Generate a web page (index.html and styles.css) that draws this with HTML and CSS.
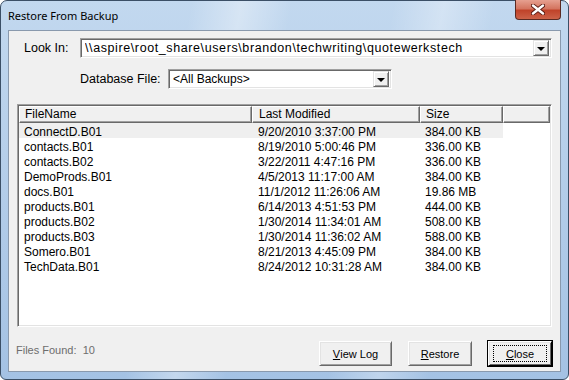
FILE: index.html
```html
<!DOCTYPE html>
<html lang="en">
<head>
  <meta charset="UTF-8" />
  <title>Restore From Backup</title>
  <link rel="stylesheet" href="styles.css">
</head>
<body>
  <div class="window">
    <div class="titlebar">
      <span class="title">Restore From Backup</span>
      <button class="close-x" aria-label="Close">
        <svg width="14" height="11" viewBox="0 0 14 11">
          <path d="M2 1.5 L12 9.5 M12 1.5 L2 9.5" stroke="#5a1a12" stroke-width="4.2" stroke-linecap="round"/>
          <path d="M2 1.5 L12 9.5 M12 1.5 L2 9.5" stroke="#ffffff" stroke-width="2.4" stroke-linecap="round"/>
        </svg>
      </button>
    </div>

    <div class="client">
      <div class="row look-in">
        <label class="lbl">Look In:</label>
        <div class="combo wide">
          <span class="combo-text path">\\aspire\root_share\users\brandon\techwriting\quotewerkstech</span>
          <span class="drop"><i></i></span>
        </div>
      </div>

      <div class="row db-file">
        <label class="lbl">Database File:</label>
        <div class="combo narrow">
          <span class="combo-text">&lt;All Backups&gt;</span>
          <span class="drop"><i></i></span>
        </div>
      </div>

      <div class="listview">
        <div class="lv-head">
          <span class="col c1">FileName</span>
          <span class="col c2">Last Modified</span>
          <span class="col c3">Size</span>
          <span class="col c4"></span>
        </div>
        <div class="lv-body" id="rows"></div>
      </div>

      <div class="bottom">
        <span class="found">Files Found:&nbsp; 10</span>
        <div class="buttons">
          <button class="btn viewlog"><u>V</u>iew Log</button>
          <button class="btn"><u>R</u>estore</button>
          <button class="btn default"><span class="focus"><u>C</u>lose</span></button>
        </div>
      </div>
    </div>
  </div>

  <script>
    // backup files found in the folder
    const files = [
      ['ConnectD.B01', '9/20/2010 3:37:00 PM', '384.00 KB'],
      ['contacts.B01', '8/19/2010 5:00:46 PM', '336.00 KB'],
      ['contacts.B02', '3/22/2011 4:47:16 PM', '336.00 KB'],
      ['DemoProds.B01', '4/5/2013 11:17:00 AM', '384.00 KB'],
      ['docs.B01', '11/1/2012 11:26:06 AM', '19.86 MB'],
      ['products.B01', '6/14/2013 4:51:53 PM', '444.00 KB'],
      ['products.B02', '1/30/2014 11:34:01 AM', '508.00 KB'],
      ['products.B03', '1/30/2014 11:36:02 AM', '588.00 KB'],
      ['Somero.B01', '8/21/2013 4:45:09 PM', '384.00 KB'],
      ['TechData.B01', '8/24/2012 10:31:28 AM', '384.00 KB']
    ];

    const rows = document.getElementById('rows');
    files.forEach((f, i) => {
      const row = document.createElement('div');
      row.className = 'lv-row' + (i === 0 ? ' selected' : '');
      f.forEach((text, c) => {
        const cell = document.createElement('span');
        cell.className = 'cell c' + (c + 1);
        cell.textContent = text;
        row.appendChild(cell);
      });
      rows.appendChild(row);
    });
  </script>
</body>
</html>
```

FILE: styles.css
```css
* {
  margin: 0;
  padding: 0;
  box-sizing: border-box;
}

body {
  width: 569px;
  height: 380px;
  background: #ffffff;
  font-family: 'Liberation Sans', Arial, sans-serif;
  font-size: 12px;
  color: #000;
  overflow: hidden;
}

.window {
  width: 569px;
  height: 380px;
  border: 1px solid #3b4f66;
  border-radius: 7px 7px 6px 6px;
  background:
    linear-gradient(100deg, rgba(255,255,255,0) 30%, rgba(255,255,255,0.35) 38%, rgba(255,255,255,0) 46%, rgba(255,255,255,0) 62%, rgba(255,255,255,0.3) 70%, rgba(255,255,255,0) 78%),
    linear-gradient(180deg, #c2d8ef 0%, #b6cfea 40%, #a4c2e4 100%);
  padding: 0 7px 7px 7px;
  display: flex;
  flex-direction: column;
}

.titlebar {
  height: 29px;
  display: flex;
  justify-content: space-between;
  align-items: flex-start;
}

.title {
  font-family: 'Noto Sans', 'Open Sans', sans-serif;
  font-size: 11px;
  color: #000;
  margin-top: 7px;
}

.close-x {
  width: 46px;
  height: 20px;
  margin-top: -1px;
  border: 1px solid #5a2a22;
  border-top: none;
  border-radius: 0 0 4px 4px;
  background: linear-gradient(180deg, #e6a090 0%, #d47560 45%, #c0432a 55%, #cc6248 100%);
  display: flex;
  align-items: center;
  justify-content: center;
}

.client {
  flex: 1;
  background: #f0f0f0;
  border: 1px solid #8999ad;
  padding: 7px 8px 4px 8px;
  display: flex;
  flex-direction: column;
}

.row {
  display: flex;
  align-items: center;
  height: 20px;
}

.lbl {
  font-size: 12.5px;
  white-space: nowrap;
}

.look-in .lbl {
  margin-left: 7px;
  width: 56px;
}

.db-file {
  margin-top: 11px;
}

.db-file .lbl {
  margin-left: 63px;
  width: 88px;
}

.combo {
  height: 20px;
  background: #fff;
  border: 1px solid;
  border-color: #a0a0a0 #ffffff #ffffff #a0a0a0;
  box-shadow: inset 1px 1px 0 #696969, inset -1px -1px 0 #e3e3e3;
  display: flex;
  align-items: center;
  padding: 2px 2px 2px 4px;
}

.combo.wide {
  flex: 1;
}

.combo.narrow {
  width: 224px;
}

.combo-text {
  flex: 1;
  font-size: 12px;
  white-space: nowrap;
  overflow: hidden;
}

.combo-text.path {
  font-size: 12.5px;
  letter-spacing: 0.6px;
}

.drop {
  width: 16px;
  height: 16px;
  background: #f0f0f0;
  border: 1px solid;
  border-color: #e3e3e3 #696969 #696969 #e3e3e3;
  box-shadow: inset 1px 1px 0 #fff, inset -1px -1px 0 #a0a0a0;
  display: flex;
  align-items: center;
  justify-content: center;
}

.drop i {
  width: 0;
  height: 0;
  border-left: 4px solid transparent;
  border-right: 4px solid transparent;
  border-top: 4px solid #000;
  margin-top: 1px;
}

.listview {
  margin-top: 15px;
  height: 223px;
  background: #fff;
  border: 1px solid;
  border-color: #a0a0a0 #ffffff #ffffff #a0a0a0;
  box-shadow: inset 1px 1px 0 #696969, inset -1px -1px 0 #e3e3e3;
  padding: 1px;
}

.lv-head {
  display: flex;
  height: 17px;
}

.col {
  background: #f0f0f0;
  border: 1px solid;
  border-color: #ffffff #696969 #696969 #ffffff;
  box-shadow: inset -1px -1px 0 #a0a0a0;
  padding-left: 4px;
  line-height: 15px;
  font-size: 12px;
  white-space: nowrap;
}

.c1 { width: 233px; padding-left: 5px; }
.c2 { width: 168px; padding-left: 6px; }
.c3 { width: 83px; padding-left: 5px; }
.c4 { flex: 1; }

.lv-row {
  display: flex;
  height: 15px;
  line-height: 18px;
  font-size: 12px;
}

.lv-row.selected .cell {
  background: #efefef;
}

.cell {
  white-space: nowrap;
}

.lv-row .c1 { padding-left: 5px; }
.lv-row .c2 { padding-left: 6px; }
.lv-row .c3 { padding-left: 5px; }

.bottom {
  margin-top: 14px;
  display: flex;
  justify-content: space-between;
  align-items: flex-start;
}

.found {
  color: #6d6d6d;
  font-size: 11px;
  margin-left: -1px;
  margin-top: 3px;
}

.buttons {
  display: flex;
  gap: 16px;
}

.btn {
  width: 64px;
  height: 25px;
  font-family: 'Liberation Sans', Arial, sans-serif;
  font-size: 11px;
  color: #000;
  background: #f0f0f0;
  border: 1px solid;
  border-color: #ffffff #696969 #696969 #ffffff;
  box-shadow: inset 1px 1px 0 #e3e3e3, inset -1px -1px 0 #a0a0a0;
  display: flex;
  align-items: center;
  justify-content: center;
}

.btn.viewlog {
  width: 73px;
}

.btn.default {
  outline: 1px solid #000;
  outline-offset: 0;
  border-color: #ffffff #000000 #000000 #ffffff;
  box-shadow: inset 1px 1px 0 #e3e3e3, inset -1px -1px 0 #696969;
}

.focus {
  width: 54px;
  height: 17px;
  border: 1px dotted #000;
  display: flex;
  align-items: center;
  justify-content: center;
}
```
